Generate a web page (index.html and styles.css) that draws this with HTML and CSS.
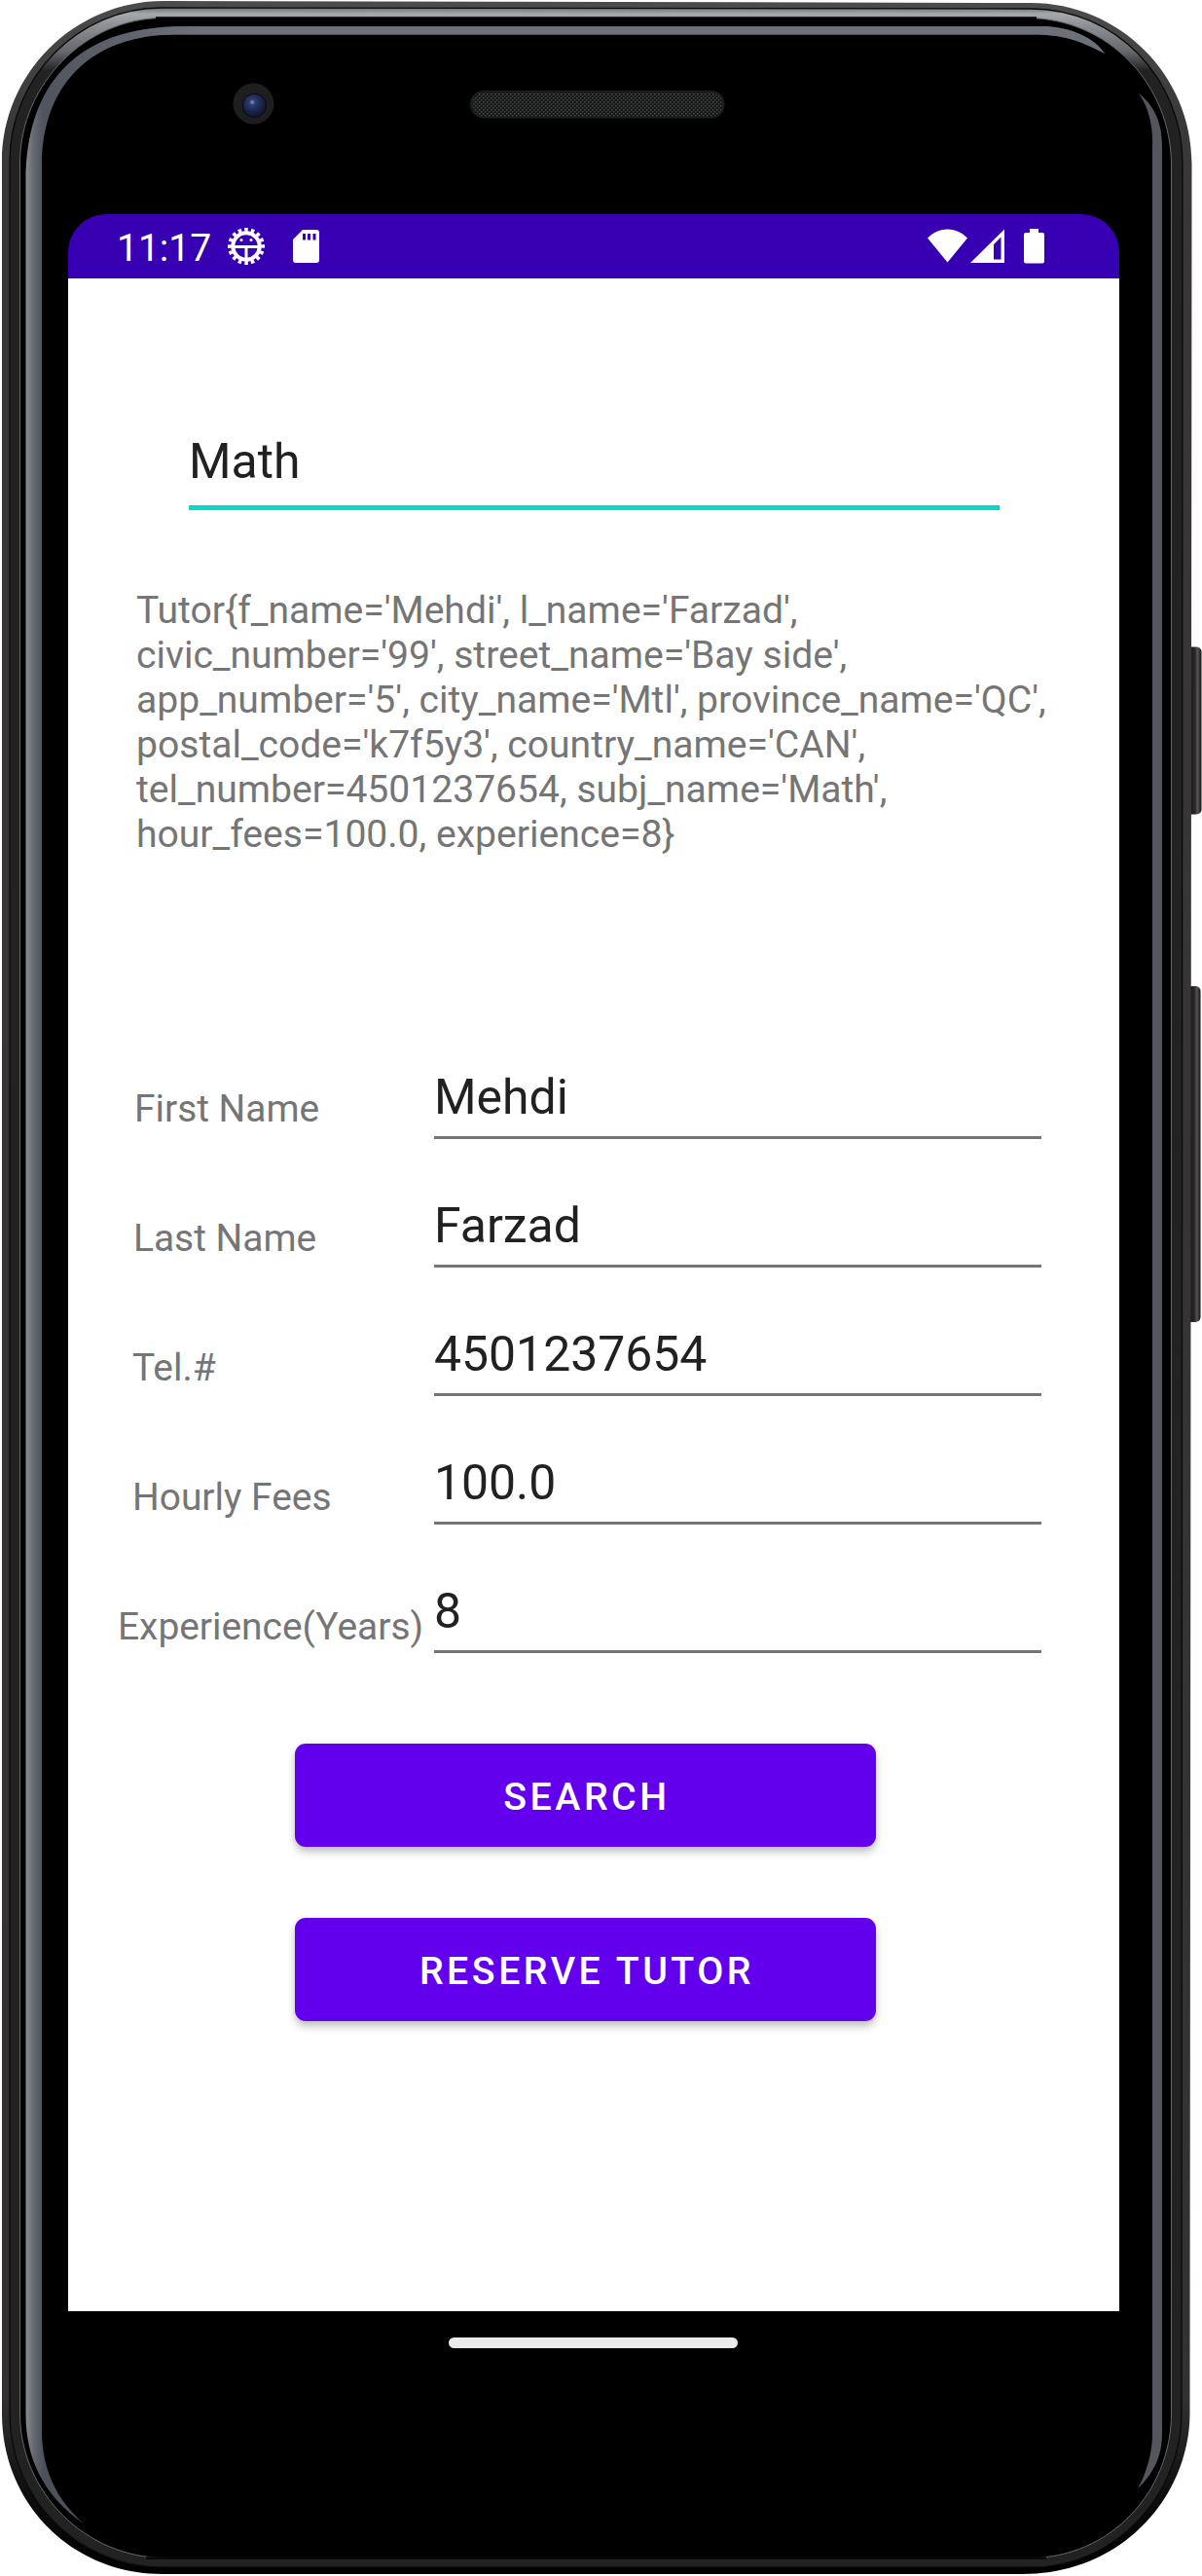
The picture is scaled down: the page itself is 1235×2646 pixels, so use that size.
FILE: index.html
```html
<!DOCTYPE html>
<html lang="en">
<head>
<meta charset="utf-8">
<title>Tutor Search</title>
<link rel="stylesheet" href="styles.css">
</head>
<body>
<div class="phone">
  <svg class="frame" width="1235" height="2646" viewBox="0 0 1235 2646" aria-hidden="true">
    <defs>
      <linearGradient id="rim" gradientUnits="userSpaceOnUse" x1="0" y1="0" x2="0" y2="2646">
        <stop offset="0" stop-color="#4c4c4c"/><stop offset=".05" stop-color="#393737"/>
        <stop offset=".93" stop-color="#343132"/><stop offset=".97" stop-color="#0c0c0c"/><stop offset="1" stop-color="#000"/>
      </linearGradient>
      <linearGradient id="metal" gradientUnits="userSpaceOnUse" x1="0" y1="8" x2="0" y2="98">
        <stop offset="0" stop-color="#6e7074"/><stop offset=".07" stop-color="#a5a8ac"/><stop offset=".2" stop-color="#8d9095"/>
        <stop offset=".5" stop-color="#66686d"/><stop offset=".72" stop-color="#222"/><stop offset="1" stop-color="#222"/>
      </linearGradient>
      <linearGradient id="edge" gradientUnits="userSpaceOnUse" x1="26" y1="0" x2="44" y2="0">
        <stop offset="0" stop-color="#8b8d8f"/><stop offset=".5" stop-color="#63676e"/><stop offset="1" stop-color="#4d5159"/>
      </linearGradient>
      <linearGradient id="edgeTop" gradientUnits="userSpaceOnUse" x1="27" y1="0" x2="200" y2="0">
        <stop offset="0" stop-color="#6c7078" stop-opacity="0"/><stop offset="1" stop-color="#6c7078"/>
      </linearGradient>
      <linearGradient id="key" x1="0" y1="0" x2="1" y2="0">
        <stop offset="0" stop-color="#111"/><stop offset=".55" stop-color="#262626"/><stop offset=".75" stop-color="#555"/><stop offset="1" stop-color="#111"/>
      </linearGradient>
      <radialGradient id="lens" cx=".4" cy=".35" r=".65">
        <stop offset="0" stop-color="#8b9ac4"/><stop offset=".2" stop-color="#2f3e70"/><stop offset=".7" stop-color="#17224a"/><stop offset="1" stop-color="#10162a"/>
      </radialGradient>
      <pattern id="mesh" width="4" height="4" patternUnits="userSpaceOnUse">
        <rect width="4" height="4" fill="#161717"/><rect width="1.5" height="1.5" fill="#4c4f4e"/><rect x="2" y="2" width="1.5" height="1.5" fill="#424544"/>
      </pattern>
    </defs>
    <rect x="1219" y="664.5" width="15.5" height="172" rx="5" fill="url(#key)"/>
    <rect x="1219" y="1013" width="14.5" height="345" rx="5" fill="url(#key)"/>
    <path fill="url(#rim)" d="M2 166C2 76 76 1 168 1L1059 3C1150 3 1224.500 77 1224.500 168L1222.500 2479C1222.500 2560 1157 2644 1050 2644H167C74 2644 2 2572 2 2479Z"/>
    <path fill="url(#metal)" stroke="#0a0a0a" stroke-width="1.300" d="M10 166C10 80 80 8 166 8L1059 9C1146 9 1215 80 1215 168L1214 2479C1214 2562 1146 2637 1060 2637H167C80 2637 10 2566 10 2479Z"/>
    <path fill="#000" stroke="#666769" stroke-width="1" d="M20.500 168C20.500 86 88 18.500 168 18.500H1055C1138 18.500 1203.500 86 1203.500 170V2479C1203.500 2560 1140 2627.500 1058 2627.500H170C88 2627.500 20.500 2560 20.500 2479Z"/>
    <path stroke="#050505" stroke-width="2.500" fill="none" d="M150 2627.500H1075M160 18.500H1065"/>
    <path fill="url(#edge)" d="M87 2593C45 2565 26.500 2525 26.500 2480V187C26.500 90 75 27 190 27H1070C1095 27 1122 36 1135 55C1112 43 1095 35.500 1060 35.500H180C95 35.500 43 86 43 170V2500C44 2540 60 2570 87 2593Z"/>
    <path fill="url(#edgeTop)" d="M26.500 187C26.500 90 75 27 190 27H1070C1095 27 1122 36 1135 55C1112 43 1095 35.500 1060 35.500H180C95 35.500 43 86 43 170Z"/>
    <path fill="#54555d" d="M1170 96C1184 107 1194 123 1194 150V2500C1194 2522 1186 2540 1169 2556C1178 2540 1184 2520 1184 2500V150C1185 130 1180 110 1170 96Z"/>
    <circle cx="260.500" cy="106.500" r="21" fill="#1e1e20"/>
    <circle cx="261.500" cy="108.500" r="12.500" fill="#0b0c10"/>
    <circle cx="261.500" cy="108.500" r="11.500" fill="url(#lens)"/>
    <rect x="484" y="94" width="259.500" height="26.500" rx="13" fill="url(#mesh)" stroke="#1c1c20" stroke-width="2"/>
  </svg>

  <main class="screen">
    <header class="status">
      <span class="clock">11:17</span>
      <svg class="debug" width="40" height="40" viewBox="-20 -20 40 40">
        <circle r="13.700" fill="none" stroke="#fff" stroke-width="4"/>
        <circle r="16.700" fill="none" stroke="#fff" stroke-width="4.600" pathLength="64" stroke-dasharray="2.100 1.900" transform="rotate(-5.900)"/>
        <path d="M-13 .5H13M0 0V14" stroke="#fff" stroke-width="3"/>
        <circle cx="-5" cy="-6.500" r="1.500" fill="#fff"/><circle cx="5" cy="-6.500" r="1.500" fill="#fff"/>
      </svg>
      <svg class="sd" width="27" height="34" viewBox="0 0 27 34"><path fill="#fff" fill-rule="evenodd" d="M10 0H24a3 3 0 0 1 3 3V31a3 3 0 0 1-3 3H3a3 3 0 0 1-3-3V10ZM10 4V10.500H13V4ZM15 4V10.500H18V4ZM20.500 4V10.500H23.500V4Z"/></svg>
      <svg class="signals" width="121" height="36" viewBox="953 235 121 36">
        <path fill="#fff" d="M953 244.500C965 232.500 982 232.500 994 244.500L973.500 269.500Z"/>
        <path fill="#fff" fill-rule="evenodd" d="M997 270L1032 235.500V270ZM1021 251V266.500H1028.500V243.500Z"/>
        <path fill="#fff" d="M1058 235H1067V239H1071A2 2 0 0 1 1073 241V268.500A2 2 0 0 1 1071 270.500H1054A2 2 0 0 1 1052 268.500V241A2 2 0 0 1 1054 239H1058Z"/>
      </svg>
    </header>

    <section class="content">
      <div class="subject">Math</div>
      <p class="result">Tutor{f_name='Mehdi', l_name='Farzad',<br>civic_number='99', street_name='Bay side',<br>app_number='5', city_name='Mtl', province_name='QC',<br>postal_code='k7f5y3', country_name='CAN',<br>tel_number=4501237654, subj_name='Math',<br>hour_fees=100.0, experience=8}</p>
      <div class="form">
        <div class="labels">
          <div class="label first">First Name</div>
          <div class="label last">Last Name</div>
          <div class="label tel">Tel.#</div>
          <div class="label fees">Hourly Fees</div>
          <div class="label years">Experience(Years)</div>
        </div>
        <div class="fields">
          <div class="field">Mehdi</div>
          <div class="field">Farzad</div>
          <div class="field">4501237654</div>
          <div class="field">100.0</div>
          <div class="field">8</div>
        </div>
      </div>
      <div class="actions">
        <button class="btn">SEARCH</button>
        <button class="btn">RESERVE TUTOR</button>
      </div>
    </section>
  </main>
  <div class="home"></div>
</div>
</body>
</html>
```

FILE: styles.css
```css
* { box-sizing: border-box; }
body { margin: 0; background: #fff; font-family: Roboto, "Liberation Sans", sans-serif; }
.phone { position: relative; width: 1235px; height: 2646px; padding: 220px 85px 0 70px; overflow: hidden; }
.frame { position: absolute; left: 0; top: 0; }
.screen { position: relative; width: 1080px; height: 2154px; }
.status { display: flex; align-items: flex-start; height: 66px; padding: 15px 76px 0 50px; border-radius: 39px 39px 0 0; background: #3700b3; color: #fff; }
.clock { width: 113px; font-size: 39px; line-height: 40px; }
.debug { margin-top: -2px; }
.sd { margin: 1px 0 0 28px; }
.signals { margin-left: auto; }
.content { height: 2088px; padding: 149px 0 0; background: #fff; }
.subject { width: 833px; height: 89px; margin-left: 124px; border-bottom: 5px solid #03dac5; font-size: 49.9px; line-height: 79px; color: #212121; }
.result { margin: 80px 0 0 70px; font-size: 39.1px; line-height: 46px; color: #757575; white-space: nowrap; }
.form { display: flex; margin-top: 182px; }
.labels { width: 376px; padding: 54px 0 0 51px; font-size: 38.9px; line-height: 46px; color: #757575; white-space: nowrap; }
.label { height: 133px; }
.first { padding-left: 17px; }
.last { padding-left: 16px; }
.tel { padding-left: 15px; }
.fees { padding-left: 15px; }
.years { height: 46px; }
.field { width: 624px; height: 108px; margin-bottom: 24px; padding-top: 36px; border-bottom: 3px solid #757575; font-size: 49.9px; line-height: 58px; color: #212121; }
.actions { display: flex; flex-direction: column; gap: 73px; margin: 69px 0 0 233px; }
.btn { width: 597px; height: 106px; padding: 4px 0 0 3px; border: 0; border-radius: 11px; background: #6200ee; color: #fff; font: 500 39.3px/46px Roboto, "Liberation Sans", sans-serif; letter-spacing: .0893em; box-shadow: 0 6px 8px rgba(0,0,0,.2), 0 1px 6px rgba(0,0,0,.1); }
.home { position: relative; width: 297px; height: 11px; margin: 27px 0 0 391px; border-radius: 6px; background: #ebebeb; }
```
